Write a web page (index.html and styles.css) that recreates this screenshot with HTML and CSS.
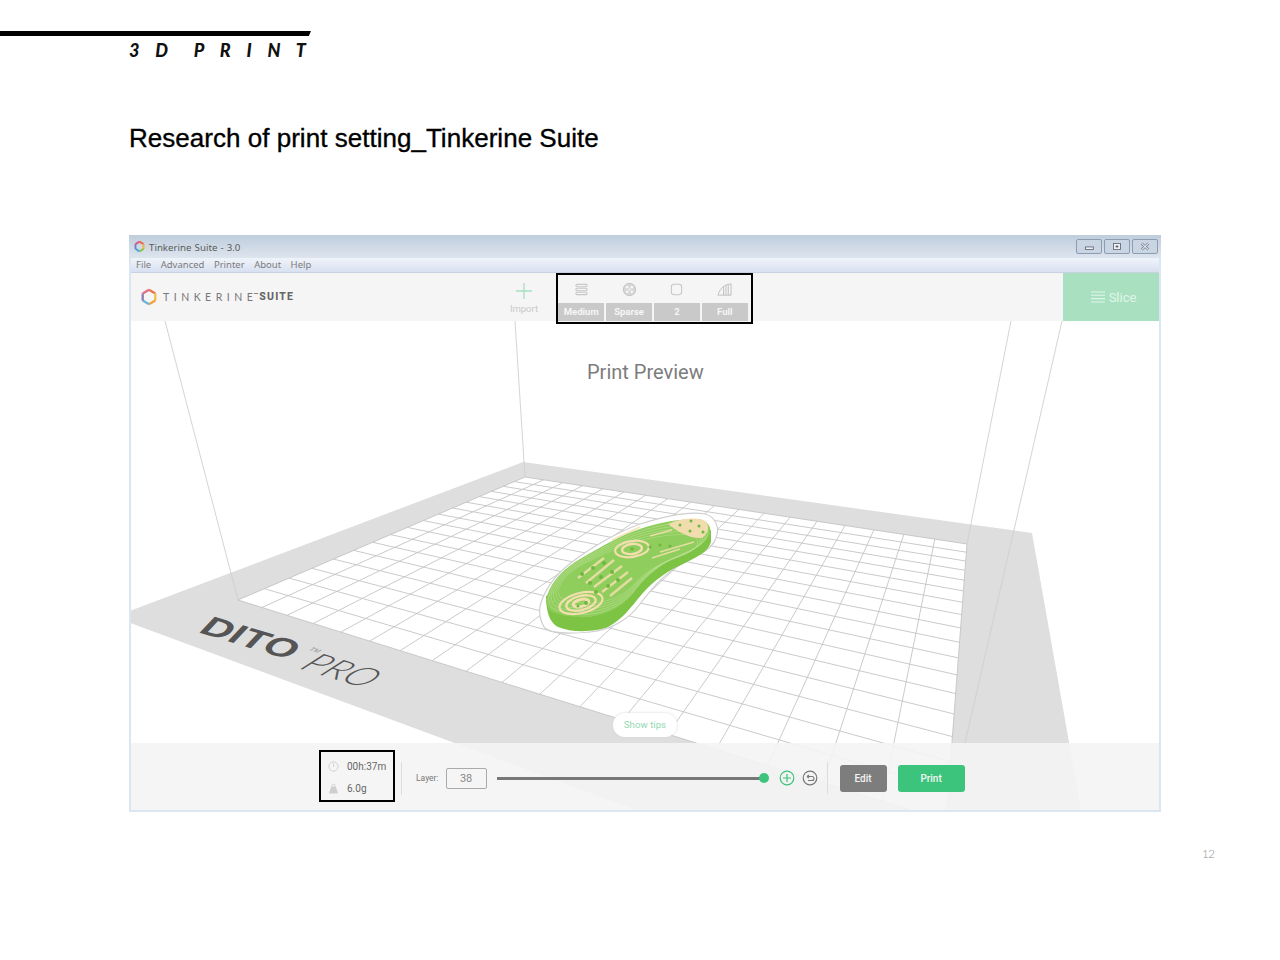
FILE: index.html
```html
<!DOCTYPE html>
<html lang="en">
<head>
<meta charset="utf-8">
<title>3D Print</title>
<link rel="stylesheet" href="styles.css">
</head>
<body>
<div class="page">
  <header class="head">
    <div class="rule"></div>
    <div class="section">3 D &nbsp;P R I N T</div>
  </header>
  <h1 class="heading">Research of print setting_Tinkerine Suite</h1>

  <div class="window">
    <div class="titlebar">
      <svg class="hex-small" viewBox="0 0 16 16"><g fill="none" stroke-width="2.4"><path d="M8 2 13 5" stroke="#e8694a"/><path d="M13 5V11" stroke="#f2b53c"/><path d="M13 11 8 14" stroke="#8cc63f"/><path d="M8 14 3 11" stroke="#4aa8d8"/><path d="M3 11V5" stroke="#7a7fc0"/><path d="M3 5 8 2" stroke="#d85a8a"/></g></svg>
      <span class="title-text">Tinkerine Suite - 3.0</span>
      <div class="win-btns">
        <span class="win-btn"><svg viewBox="0 0 26 15"><rect x="9" y="8" width="9" height="3" fill="#eef2f6" stroke="#667"/></svg></span>
        <span class="win-btn"><svg viewBox="0 0 26 15"><rect x="9" y="4" width="8" height="7" fill="#eef2f6" stroke="#667"/><rect x="11.5" y="6.5" width="3" height="2" fill="#556"/></svg></span>
        <span class="win-btn"><svg viewBox="0 0 26 15"><path d="M9 4 17 11M17 4 9 11" stroke="#7d8794" stroke-width="3"/><path d="M9 4 17 11M17 4 9 11" stroke="#e6ebf1" stroke-width="1.200"/></svg></span>
      </div>
    </div>
    <nav class="menubar"><span>File</span><span>Advanced</span><span>Printer</span><span>About</span><span>Help</span></nav>

    <div class="toolbar">
      <div class="brand">
        <svg class="hex-big" viewBox="0 0 20 20"><g fill="none" stroke-width="2.6"><path d="M10 2 17 6" stroke="#e8734a"/><path d="M17 6V14" stroke="#f2c04c"/><path d="M17 14 10 18" stroke="#f0a040"/><path d="M10 18 3 14" stroke="#6cb4d8"/><path d="M3 14V6" stroke="#8a7fb8"/><path d="M3 6 10 2" stroke="#e0708a"/></g></svg>
        <span class="brand-name">TINKERINE</span>
        <svg class="brand-tm" viewBox="0 0 4 2"><path d="M0 .5H4" stroke="#888" stroke-width="1"/></svg>
        <span class="brand-suite">SUITE</span>
      </div>
      <div class="import">
        <svg viewBox="0 0 20 20"><path d="M10 1V19M1 10H19" stroke="#a6dfc0" stroke-width="1.4"/></svg>
        <span>Import</span>
      </div>
      <div class="settings">
        <div class="setting">
          <svg viewBox="0 0 16 16"><g fill="none" stroke="#c6c6c6" stroke-width="1.2"><rect x="2" y="2.5" width="12" height="2.6" rx="1.3"/><rect x="2" y="6.7" width="12" height="2.6" rx="1.3"/><rect x="2" y="10.9" width="12" height="2.6" rx="1.3"/></g></svg>
          <span class="setting-label">Medium</span>
        </div>
        <div class="setting">
          <svg viewBox="0 0 16 16"><circle cx="8" cy="8" r="6.6" fill="#d6d6d6" stroke="#c2c2c2"/><g fill="#f5f5f5"><circle cx="5.5" cy="5.5" r="1.4"/><circle cx="10.5" cy="5.5" r="1.4"/><circle cx="5.5" cy="10.5" r="1.4"/><circle cx="10.5" cy="10.5" r="1.4"/><circle cx="8" cy="8" r="1.1"/></g></svg>
          <span class="setting-label">Sparse</span>
        </div>
        <div class="setting">
          <svg viewBox="0 0 16 16"><rect x="2.5" y="2.5" width="11" height="11" rx="3" fill="none" stroke="#c6c6c6" stroke-width="1.1"/></svg>
          <span class="setting-label">2</span>
        </div>
        <div class="setting">
          <svg viewBox="0 0 16 16"><path d="M1 14C3 8 6 3 15 2V14ZM7 5V14M9.5 3.500V14M12 2.800V14" fill="none" stroke="#bdbdbd" stroke-width="1"/></svg>
          <span class="setting-label">Full</span>
        </div>
      </div>
      <div class="slice">
        <svg viewBox="0 0 14 12"><path d="M0 1H14M0 4.300H14M0 7.600H14M0 11H14" stroke="#e0f5e9" stroke-width="1.100"/></svg>
        <span>Slice</span>
      </div>
    </div>

    <div class="scene">
      <svg class="stage" viewBox="131 321 1028 489" xmlns="http://www.w3.org/2000/svg">
        <defs>
          <path id="sole" d="M546 600C549 585 560 572 575 562C592 552 606 544 622 536C640 528 668 519 696 519C706 519 712 526 710 533C708 542 696 548 680 555C664 562 648 574 636 590C626 604 610 614 590 617C570 618 552 614 548 608Z"/>
        </defs>
        <polygon points="130,611 523,462 1032,533 1081,810 636,810 130,623" fill="#dedede"/>
        <polygon id="bed" points="525,477 967,544 946,821 238,600" fill="#fff"/>
        <g id="grid" stroke="#c4c4c4" stroke-width="0.9" fill="none"></g>
        <g stroke="#cfcfcf" stroke-width="0.9">
          <line x1="165" y1="321" x2="238" y2="600"/>
          <line x1="515" y1="321" x2="525" y2="477"/>
          <line x1="1011" y1="321" x2="967" y2="544"/>
          <line x1="1062" y1="321" x2="965" y2="743"/>
          <line x1="965" y1="743" x2="906" y2="810"/>
        </g>
        <text class="logo-dito" transform="matrix(1.95 .586 -1.1 1.16 197 632)">DITO</text>
        <text class="logo-tm" transform="matrix(.8 .24 -.9 .5 308 650)">TM</text>
        <text class="logo-pro" transform="matrix(1.7 .51 -1.65 1.06 297 668)">PRO</text>

        <path d="M540 606C545 588 556 574 572 562C590 548 618 532 640 524C665 516 690 511 705 514C716 517 720 528 716 538C712 550 696 556 680 565C664 574 652 588 640 604C630 618 612 630 590 632C570 634 550 634 544 627C540 620 539 612 540 606Z" fill="#fff" stroke="#cfcfcf" stroke-width="1.200"/>
        <path d="M546 600C547 612 549 622 558 627C572 633 595 632 608 627C622 620 632 606 642 594C655 579 668 571 685 563C697 557 708 552 711 542L711 530L546 596Z" fill="#7dc444"/>
        <use href="#sole" fill="#8fcd5c"/>
        <g fill="none" stroke="#b9df92" stroke-width=".7">
          <use href="#sole" transform="translate(625 570) scale(.97 .94) translate(-625 -570)"/>
          <use href="#sole" transform="translate(625 570) scale(.94 .88) translate(-625 -570)"/>
          <use href="#sole" transform="translate(625 570) scale(.91 .82) translate(-625 -570)"/>
          <use href="#sole" transform="translate(625 570) scale(.88 .76) translate(-625 -570)"/>
          <use href="#sole" transform="translate(625 570) scale(.85 .70) translate(-625 -570)"/>
        </g>
        <g fill="none" stroke="#f3dfae">
          <ellipse cx="581" cy="603" rx="22" ry="10" stroke-width="2.200" transform="rotate(-14 581 603)"/>
          <ellipse cx="581" cy="603" rx="15" ry="7" stroke-width="2.400" transform="rotate(-14 581 603)"/>
          <ellipse cx="581" cy="603" rx="8" ry="3.500" stroke-width="3" transform="rotate(-14 581 603)"/>
          <ellipse cx="632" cy="549" rx="17" ry="8" stroke-width="2.200" transform="rotate(-8 632 549)"/>
          <ellipse cx="632" cy="549" rx="10" ry="5" stroke-width="2.400" transform="rotate(-8 632 549)"/>
          <path d="M578 578 604 558M586 583 614 560M594 587 622 566M602 592 628 572M610 596 632 578" stroke-width="2.400" stroke-opacity=".85"/>
          <path d="M612 540 640 527M652 558 680 549M660 552 694 542M650 536 672 530" stroke-width="1.800" stroke-opacity=".85"/>
        </g>
        <path d="M668 524C682 518 698 517 705 521C710 525 709 533 702 538C690 539 678 532 668 524Z" fill="#f1dcae"/>
        <g fill="#6fb83f">
          <circle cx="680" cy="525" r="1.500"/><circle cx="691" cy="521" r="1.500"/><circle cx="699" cy="526" r="1.500"/><circle cx="690" cy="531" r="1.500"/><circle cx="703" cy="532" r="1.500"/>
          <circle cx="590" cy="583" r="2"/><circle cx="601" cy="577" r="2"/><circle cx="612" cy="572" r="2"/><circle cx="596" cy="592" r="2"/><circle cx="608" cy="586" r="2"/><circle cx="618" cy="580" r="2"/><circle cx="582" cy="574" r="2"/><circle cx="593" cy="568" r="2"/><circle cx="604" cy="563" r="2"/>
          <circle cx="586" cy="603" r="2"/><circle cx="578" cy="606" r="1.500"/><circle cx="650" cy="547" r="1.500"/><circle cx="660" cy="545" r="1.500"/><circle cx="670" cy="546" r="1.500"/><circle cx="632" cy="549" r="1.800"/>
        </g>
      </svg>

      <h2 class="preview-title">Print Preview</h2>
      <div class="tips">Show tips</div>

      <div class="bottom">
        <div class="stats">
          <div class="stat">
            <svg viewBox="0 0 12 12"><circle cx="6" cy="6" r="5" fill="none" stroke="#cfcfcf"/><path d="M6 2.500V6.500" stroke="#cfcfcf"/></svg>
            <span>00h:37m</span>
          </div>
          <div class="stat">
            <svg viewBox="0 0 12 12"><path d="M3.500 4H8.500L11 11.500H1Z" fill="#cfcfcf"/><circle cx="6" cy="3" r="1.800" fill="none" stroke="#cfcfcf"/></svg>
            <span>6.0g</span>
          </div>
        </div>
        <span class="divider"></span>
        <span class="layer-label">Layer:</span>
        <span class="layer-input">38</span>
        <div class="track"><span class="knob"></span></div>
        <svg class="round-icon" viewBox="0 0 16 16"><circle cx="8" cy="8" r="6.800" fill="none" stroke="#3cc47c" stroke-width="1.200"/><path d="M8 4V12M4 8H12" stroke="#3cc47c" stroke-width="1.200"/></svg>
        <svg class="round-icon undo" viewBox="0 0 16 16"><circle cx="8" cy="8" r="6.800" fill="none" stroke="#777" stroke-width="1.200"/><path d="M5 6.500H10Q12 6.500 12 8.500T10 10.500H6M5 6.500 7 4.800M5 6.500 7 8.200" fill="none" stroke="#777" stroke-width="1.100"/></svg>
        <span class="divider second"></span>
        <button class="btn edit">Edit</button>
        <button class="btn print">Print</button>
      </div>
    </div>
  </div>
  <footer class="pager">12</footer>
</div>
<script src="script.js"></script>
</body>
</html>
```
FILE: styles.css
```css
* { box-sizing: border-box; }
html, body { margin: 0; padding: 0; background: #fff; }
.page { width: 1280px; height: 960px; overflow: hidden; font-family: "Liberation Sans", Arial, sans-serif; }

.head { padding-top: 31px; }
.rule { width: 311px; height: 5px; background: #000; clip-path: polygon(0 0, 100% 0, 99.300% 100%, 0 100%); }
.section { margin: 5px 0 0 129px; font: italic 900 18px/18px Lato, "Liberation Sans", sans-serif; letter-spacing: 6px; color: #111; white-space: nowrap; }

.heading { margin: 64px 0 0 129px; font: 400 26px/30px "Liberation Sans", Arial, sans-serif; -webkit-text-stroke: .35px #000; color: #000; letter-spacing: .025px; }

.window { margin: 82px 0 0 129px; width: 1032px; height: 577px; display: flex; flex-direction: column; background: #dbe6f3; padding: 0 2px 2px; font-family: Roboto, "Liberation Sans", sans-serif; }

.titlebar { height: 23px; margin: 0 -2px; padding: 0 3px 0 4px; display: flex; align-items: center; background: linear-gradient(#bfcddc, #dde5ee); }
.hex-small { width: 13px; height: 13px; margin-right: 3px; }
.title-text { margin-top: 2px; font: 400 9.700px/12px "Noto Sans", sans-serif; word-spacing: .6px; color: #5a5a5a; }
.win-btns { margin-left: auto; display: flex; gap: 2px; }
.win-btn { width: 26px; height: 15px; border: 1px solid #8d9cb0; border-radius: 2px; background: #c9d5e3; display: block; }
.win-btn svg { display: block; width: 100%; height: 100%; }

.menubar { height: 15px; display: flex; gap: 9.500px; padding-left: 5px; align-items: center; background: linear-gradient(#f0f4fa, #d8dff0); border-bottom: 1px solid #c9d2e2; font: 400 9.500px/12px "Noto Sans", sans-serif; color: #7b7b7b; }

.toolbar { height: 48px; flex: none; display: flex; align-items: stretch; background: #f5f5f5; position: relative; z-index: 2; }
.brand { width: 363px; padding-left: 9px; display: flex; align-items: center; }
.hex-big { width: 18px; height: 18px; margin-right: 5px; }
.brand-name { font: 400 10.500px/12px Lato, sans-serif; letter-spacing: 4.500px; color: #777; white-space: nowrap; }
.brand-tm { width: 4px; height: 2px; margin: -6px 0 0 -3px; }
.brand-suite { margin-left: 1px; font: 800 10.500px/12px Roboto, sans-serif; letter-spacing: 1.200px; color: #666; }

.import { width: 60px; display: flex; flex-direction: column; align-items: center; font-size: 9.500px; color: #c9c9c9; padding-top: 9px; }
.import svg { width: 18px; height: 18px; margin-bottom: 3px; }

.settings { width: 197px; height: 51px; margin-left: 2px; border: 2px solid #000; background: #f5f5f5; display: flex; gap: 1.500px; padding: 0 3px 1px 0; }
.setting { flex: 1; display: flex; flex-direction: column; align-items: center; justify-content: flex-end; }
.setting svg { width: 15px; height: 15px; margin-bottom: 6px; }
.setting-label { width: 100%; height: 18px; background: #c9c9c9; color: #f6f6f6; font: 700 9.500px/18px Roboto, sans-serif; text-align: center; }

.slice { margin-left: auto; width: 96px; padding-left: 5px; background: #a9e0c0; display: flex; align-items: center; justify-content: center; gap: 4px; color: #e0f5e9; font-size: 13px; }
.slice svg { width: 14px; height: 12px; }

.scene { position: relative; flex: 1; overflow: hidden; background: #fff; }
.stage { display: block; width: 1028px; height: 489px; }
.logo-dito { font: 700 20px "Liberation Sans", sans-serif; fill: #555; }
.logo-tm { font: 400 8px "Liberation Sans", sans-serif; fill: #888; }
.logo-pro { font: 300 20px Lato, sans-serif; fill: #555; }

.preview-title { position: absolute; left: 456px; top: 39px; margin: 0; font: 400 20px/24px Roboto, sans-serif; color: #7c7c7c; }
.tips { position: absolute; left: 482px; top: 392px; width: 64px; height: 24px; border-radius: 12px; background: #fff; box-shadow: 0 0 3px #d8d8d8; color: #93d9b1; font: 400 9.700px/24px Roboto, sans-serif; text-align: center; }

.bottom { position: absolute; left: 0; right: 0; bottom: 0; height: 67px; padding-top: 3px; background: rgba(244,244,244,.9); display: flex; align-items: center; padding-left: 188px; }
.stats { width: 76px; height: 52px; margin-top: -4px; border: 2px solid #000; display: flex; flex-direction: column; justify-content: center; gap: 7px; padding: 2px 0 0 7px; }
.stat { display: flex; align-items: center; gap: 8px; font-size: 10px; line-height: 15px; color: #666; }
.stat svg { width: 11px; height: 11px; }
.divider { width: 1px; height: 33px; background: #ddd; margin-left: 6px; }
.layer-label { margin-left: 14px; font-size: 8.500px; color: #777; }
.layer-input { margin-left: 7px; width: 41px; height: 21px; border: 1px solid #aaa; border-radius: 2px; text-align: center; font-size: 11px; line-height: 19px; color: #888; }
.track { position: relative; margin-left: 10px; width: 268px; height: 3px; background: #777; }
.knob { position: absolute; right: -4px; top: -3.500px; width: 10px; height: 10px; border-radius: 50%; background: #3cc47c; }
.round-icon { width: 16px; height: 16px; margin-left: 14px; }
.round-icon.undo { margin-left: 7px; }
.divider.second { height: 32px; margin-left: 9px; }
.btn { border: 0; height: 27px; border-radius: 3px; color: #f4f4f4; font: 500 10px/27px Roboto, sans-serif; padding: 0; }
.edit { width: 47px; margin-left: 12px; background: #7d7d7d; }
.print { width: 67px; margin-left: 11px; background: #3cc47c; }

.pager { margin: 35px 0 0 1202px; font: 300 11.500px/14px Lato, sans-serif; letter-spacing: -.4px; color: #8f8f8f; }
```
FILE: script.js
```js
// Perspective grid of the print bed, mapped from a flat grid with a homography.
(function () {
  var P = [[525, 477], [967, 544], [946, 821], [238, 600]];
  var COLS = 18, ROWS = 17;
  var x0 = P[0][0], y0 = P[0][1], x1 = P[1][0], y1 = P[1][1];
  var x2 = P[2][0], y2 = P[2][1], x3 = P[3][0], y3 = P[3][1];
  var dx1 = x1 - x2, dx2 = x3 - x2, sx = x0 - x1 + x2 - x3;
  var dy1 = y1 - y2, dy2 = y3 - y2, sy = y0 - y1 + y2 - y3;
  var det = dx1 * dy2 - dx2 * dy1;
  var g = (sx * dy2 - dx2 * sy) / det, h = (dx1 * sy - sx * dy1) / det;
  var a = x1 - x0 + g * x1, b = x3 - x0 + h * x3;
  var d = y1 - y0 + g * y1, e = y3 - y0 + h * y3;
  function map(u, v) {
    var w = g * u + h * v + 1;
    return ((a * u + b * v + x0) / w).toFixed(1) + ' ' + ((d * u + e * v + y0) / w).toFixed(1);
  }
  var path = '';
  for (var i = 0; i <= COLS; i++) path += 'M' + map(i / COLS, 0) + 'L' + map(i / COLS, 1);
  for (var j = 0; j <= ROWS; j++) path += 'M' + map(0, j / ROWS) + 'L' + map(1, j / ROWS);
  var el = document.createElementNS('http://www.w3.org/2000/svg', 'path');
  el.setAttribute('d', path);
  document.getElementById('grid').appendChild(el);
})();
```
